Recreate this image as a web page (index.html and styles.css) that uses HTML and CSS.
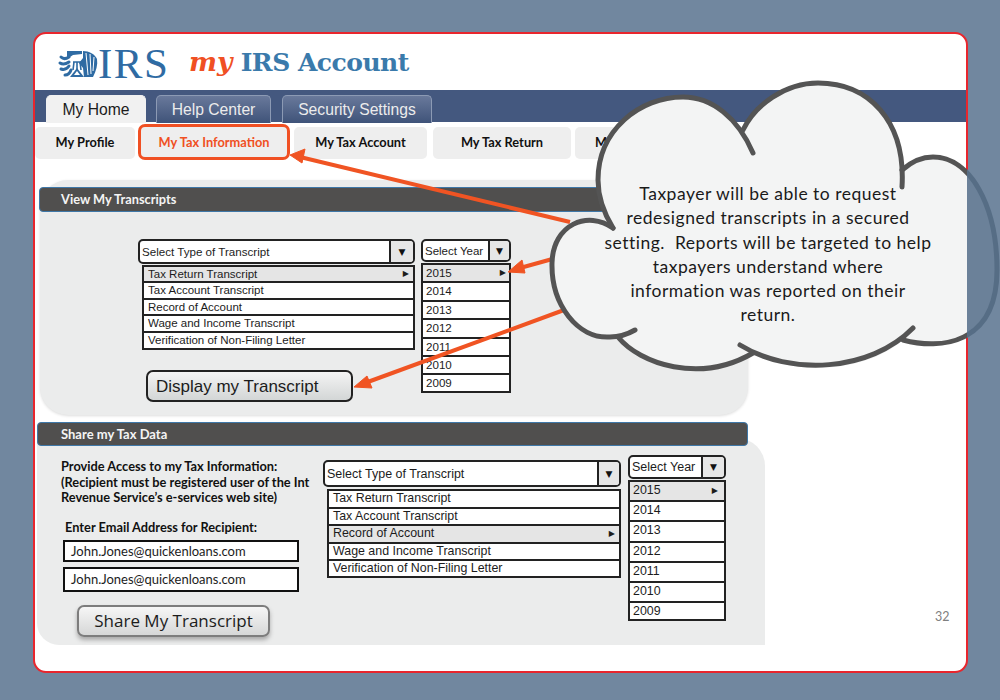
FILE: index.html
```html
<!DOCTYPE html>
<html lang="en">
<head>
    <meta charset="UTF-8">
    <meta name="viewport" content="width=device-width, initial-scale=1.0">
    <title>my IRS Account</title>
    <link rel="stylesheet" href="styles.css">
</head>
<body>
    <div class="slide">
        <div class="brand">
            <svg class="emblem" viewBox="0 0 40 28" width="40" height="28">
                <g fill="none" stroke="#2f6ba3" stroke-width="3" stroke-linecap="round">
                    <path d="M3 7c2 2 5 2 8 0"/>
                    <path d="M2 13c3 2 6 1 9-1"/>
                    <path d="M3 19c3 1 6 0 8-3"/>
                    <path d="M7 25c3 0 5-2 6-5"/>
                </g>
                <path d="M9 1h15v3l-9 1-3 2H9z" fill="#2f6ba3"/>
                <path d="M25 1c6 0 12 3 14 8 1 6-1 12-4 18H26l-1-9-4-5 4-5z" fill="#2f6ba3"/>
                <path d="M28 3l2 22M32 4l1 20M36 7l-1 14" stroke="#fff" stroke-width="1" fill="none"/>
                <path d="M15 12h8M16 12l-1 8M19 12v8M22 12l1 8" stroke="#2f6ba3" stroke-width="1.6" fill="none"/>
                <path d="M19 18l7 9H12z" fill="#2f6ba3"/>
                <path d="M19 21l3 4h-6z" fill="#fff"/>
            </svg>
            <span class="brand-irs">IRS</span>
            <span class="brand-title"><em>my</em> IRS Account</span>
        </div>

        <div class="tabs">
            <div class="tab tab-active">My Home</div>
            <div class="tab tab-help">Help Center</div>
            <div class="tab tab-security">Security Settings</div>
        </div>

        <div class="subnav">
            <div class="subnav-item item-profile">My Profile</div>
            <div class="subnav-item item-info">My Tax Information</div>
            <div class="subnav-item item-account">My Tax Account</div>
            <div class="subnav-item item-return">My Tax Return</div>
            <div class="subnav-item item-more">My</div>
        </div>

        <div class="panel-view">
            <div class="bar bar-view">View My Transcripts</div>
            <div class="view-row">
                <div class="view-left">
                    <div class="select select-type">
                        <span class="select-label">Select Type of Transcript</span>
                        <span class="select-btn">▼</span>
                    </div>
                    <div class="list list-type">
                        <div class="row active">Tax Return Transcript<span class="caret">▶</span></div>
                        <div class="row">Tax Account Transcript</div>
                        <div class="row">Record of Account</div>
                        <div class="row">Wage and Income Transcript</div>
                        <div class="row">Verification of Non-Filing Letter</div>
                    </div>
                    <div class="btn-display">Display my Transcript</div>
                </div>
                <div class="view-right">
                    <div class="select select-year">
                        <span class="select-label">Select Year</span>
                        <span class="select-btn">▼</span>
                    </div>
                    <div class="list list-year">
                        <div class="row active">2015<span class="caret">▶</span></div>
                        <div class="row">2014</div>
                        <div class="row">2013</div>
                        <div class="row">2012</div>
                        <div class="row">2011</div>
                        <div class="row">2010</div>
                        <div class="row">2009</div>
                    </div>
                </div>
            </div>
        </div>

        <div class="share">
            <div class="bar bar-share">Share my Tax Data</div>
            <div class="share-body">
                <div class="share-left">
                    <p class="share-note">Provide Access to my Tax Information:<br>(Recipient must be registered user of the Int<br>Revenue Service’s e-services web site)</p>
                    <p class="share-label">Enter Email Address for Recipient:</p>
                    <div class="email">John.Jones@quickenloans.com</div>
                    <div class="email email-second">John.Jones@quickenloans.com</div>
                    <div class="btn-share">Share My Transcript</div>
                </div>
                <div class="share-mid">
                    <div class="select select-type2">
                        <span class="select-label">Select Type of Transcript</span>
                        <span class="select-btn">▼</span>
                    </div>
                    <div class="list list-type2">
                        <div class="row">Tax Return Transcript</div>
                        <div class="row">Tax Account Transcript</div>
                        <div class="row active">Record of Account<span class="caret">▶</span></div>
                        <div class="row">Wage and Income Transcript</div>
                        <div class="row">Verification of Non-Filing Letter</div>
                    </div>
                </div>
                <div class="share-right">
                    <div class="select select-year2">
                        <span class="select-label">Select Year</span>
                        <span class="select-btn">▼</span>
                    </div>
                    <div class="list list-year2">
                        <div class="row active">2015<span class="caret">▶</span></div>
                        <div class="row">2014</div>
                        <div class="row">2013</div>
                        <div class="row">2012</div>
                        <div class="row">2011</div>
                        <div class="row">2010</div>
                        <div class="row">2009</div>
                    </div>
                </div>
            </div>
        </div>

        <div class="page-num">32</div>
    </div>

    <!-- arrows and the cloud lie over the slide -->
    <svg class="overlay" viewBox="0 0 1000 700" width="1000" height="700">
        <defs>
            <clipPath id="inside"><rect x="0" y="0" width="967" height="700"/></clipPath>
            <clipPath id="outside"><rect x="967" y="0" width="33" height="700"/></clipPath>
            <path id="cloud-fill" d="M613 228C588 210 553 224 552 263C551 305 578 339 618 337C640 364 700 384 753 353C800 378 870 370 903 340C940 350 997 345 997 270C997 205 970 157 933 157C920 157 910 163 902 170C902 120 868 83 818 83C785 83 755 105 743 130C725 108 705 97 683 97C640 97 598 130 598 180C598 200 605 215 613 228Z"/>
            <g id="cloud-lines">
                <path d="M613 228C588 210 553 224 552 263C551 305 578 339 610 337C620 337 628 334 635 330"/>
                <path d="M618 337C640 364 700 384 753 353"/>
                <path d="M740 345C790 376 870 372 913 328"/>
                <path d="M903 340C940 350 997 345 997 270C997 205 970 157 933 157C920 157 910 163 902 170"/>
                <path d="M902 187C906 120 868 83 818 83C785 83 755 105 743 130"/>
                <path d="M753 153C738 118 712 97 683 97C640 97 598 130 598 180C598 200 605 215 613 228"/>
            </g>
        </defs>
        <g fill="#f05423" stroke="#f05423">
            <path d="M570 222L300 157" fill="none" stroke-width="4"/>
            <path d="M290 155L305 149L302 163Z" stroke-width="1"/>
            <path d="M556 258L520 268" fill="none" stroke-width="4"/>
            <path d="M508 272L522 260L525 273Z" stroke-width="1"/>
            <path d="M564 310L365 383" fill="none" stroke-width="4"/>
            <path d="M354 387L367 376L372 388Z" stroke-width="1"/>
        </g>
        <g clip-path="url(#inside)">
            <use href="#cloud-fill" fill="#f3f4f4"/>
            <use href="#cloud-lines" fill="none" stroke="#545454" stroke-width="5" stroke-linecap="round"/>
        </g>
        <g clip-path="url(#outside)">
            <use href="#cloud-fill" fill="#6b8199"/>
            <use href="#cloud-lines" fill="none" stroke="#566d85" stroke-width="5"/>
        </g>
    </svg>
    <div class="cloud-text">Taxpayer will be able to request<br>redesigned transcripts in a secured<br>setting.  Reports will be targeted to help<br>taxpayers understand where<br>information was reported on their<br>return.</div>
</body>
</html>
```

FILE: styles.css
```css
html, body {
    margin: 0;
    height: 700px;
    overflow: hidden;
}
body {
    position: relative;
    background-color: #71879f;
    font-family: "Liberation Sans", Arial, sans-serif;
    color: #1c1c1c;
}
.slide {
    position: relative;
    box-sizing: border-box;
    width: 935px;
    height: 641px;
    margin-left: 33px;
    top: 32px;
    background-color: #fff;
    border: 2px solid #e8262d;
    border-radius: 13px;
}

/* header */
.brand {
    display: flex;
    align-items: center;
    height: 56px;
    padding-left: 23px;
    box-sizing: border-box;
}
.emblem {
    flex: none;
    margin-top: 4px;
}
.brand-irs {
    font-family: "Liberation Serif", serif;
    font-size: 43px;
    line-height: 48px;
    letter-spacing: 1.5px;
    color: #2f6ba3;
    width: 91px;
    margin-top: 4px;
}
.brand-title {
    font-family: "DejaVu Serif", serif;
    font-weight: bold;
    font-size: 25px;
    letter-spacing: -0.5px;
    color: #3a7aab;
    margin-top: -2px;
}
.brand-title em {
    font-size: 26.5px;
    letter-spacing: 0;
    color: #f05023;
}

/* tabs */
.tabs {
    display: flex;
    height: 32px;
    padding: 5px 0 0 11px;
    box-sizing: border-box;
    background-color: #44587f;
}
.tab {
    box-sizing: border-box;
    height: 28px;
    line-height: 28px;
    text-align: center;
    font-size: 15.7px;
    color: #ececec;
    border: 1px solid #8c9ab4;
    border-bottom: none;
    border-radius: 5px 5px 0 0;
    background: linear-gradient(#69799b, #3f5379);
}
.tab-active {
    width: 100px;
    color: #1c1c1c;
    border-color: #f1f1f1;
    background: #f1f1f1;
    position: relative;
    z-index: 1;
}
.tab-help {
    width: 115px;
    margin-left: 10px;
}
.tab-security {
    width: 150px;
    margin-left: 11px;
}

/* sub navigation */
.subnav {
    display: flex;
    height: 31px;
    margin-top: 5px;
}
.subnav-item {
    box-sizing: border-box;
    height: 32px;
    line-height: 31px;
    text-align: center;
    font-family: Lato, sans-serif;
    font-weight: bold;
    font-size: 12.8px;
    color: #111;
    background-color: #eeeeee;
    border-radius: 5px;
}
.item-profile {
    width: 100px;
}
.item-info {
    width: 152px;
    height: 36px;
    margin: -3px 0 0 3px;
    line-height: 31px;
    color: #f05023;
    border: 3px solid #f05023;
    border-radius: 7px;
}
.item-account {
    width: 133px;
    margin-left: 4px;
}
.item-return {
    width: 138px;
    margin-left: 6px;
}
.item-more {
    width: 120px;
    margin-left: 4px;
    text-align: left;
    padding-left: 20px;
}

/* section bars */
.bar {
    box-sizing: border-box;
    font-family: Lato, sans-serif;
    font-weight: bold;
    font-size: 12.8px;
    color: #f4f4f4;
    background-color: #504f4e;
    border: 1px solid #3f78a8;
    border-radius: 4px;
    padding-left: 21px;
}

/* first panel */
.panel-view {
    box-sizing: border-box;
    width: 708px;
    height: 235px;
    margin: 22px 0 0 5px;
    padding-top: 7px;
    background-color: #ebecec;
    border-radius: 28px;
    box-shadow: 0 1px 3px #ddd;
}
.bar-view {
    width: 709px;
    height: 25px;
    line-height: 23px;
    margin-left: -1px;
}
.view-row {
    display: flex;
    align-items: flex-start;
    margin-top: 27px;
    padding-left: 98px;
}
.view-left {
    width: 277px;
}
.view-right {
    width: 90px;
    margin-left: 6px;
}

/* dropdowns */
.select {
    box-sizing: border-box;
    display: flex;
    background-color: #fff;
    border: 2px solid #222;
    border-radius: 5px;
    overflow: hidden;
}
.select-label {
    flex: 1;
    padding-left: 2px;
    white-space: nowrap;
}
.select-btn {
    border-left: 2px solid #222;
    background-color: #e6e6e6;
    text-align: center;
    font-family: "DejaVu Sans", sans-serif;
    font-size: 9px;
    color: #111;
}
.list {
    box-sizing: border-box;
    border: 2px solid #222;
    background-color: #fff;
}
.row {
    display: flex;
    justify-content: space-between;
    box-sizing: border-box;
    border-bottom: 2px solid #222;
    padding: 0 4px;
    white-space: nowrap;
}
.row:last-child {
    border-bottom: none;
}
.row.active {
    background-color: #e5e5e5;
}
.caret {
    font-family: "DejaVu Sans", sans-serif;
    font-size: 8px;
}

.select-type {
    height: 25px;
    font-size: 11.6px;
    line-height: 22px;
}
.select-type .select-btn {
    width: 22px;
}
.list-type {
    height: 85px;
    margin: 1px 0 0 4px;
    font-size: 11.5px;
}
.list-type .row {
    height: 16.4px;
    line-height: 14px;
}
.select-year {
    height: 23px;
    font-size: 11.5px;
    line-height: 20px;
}
.select-year .select-btn {
    width: 19px;
}
.list-year {
    height: 130px;
    margin-top: 1px;
    font-size: 11.6px;
}
.list-year .row {
    height: 18.4px;
    line-height: 16px;
    padding: 0 3px;
}
.btn-display {
    box-sizing: border-box;
    width: 207px;
    height: 32px;
    margin: 20px 0 0 8px;
    padding-left: 8px;
    line-height: 29px;
    font-size: 17px;
    background: linear-gradient(#f4f4f4, #d3d6d6);
    border: 2px solid #222;
    border-radius: 7px;
}

/* second panel */
.share {
    margin: 7px 0 0 2px;
}
.bar-share {
    position: relative;
    width: 711px;
    height: 24px;
    line-height: 22px;
    padding-left: 23px;
    font-size: 13px;
}
.share-body {
    box-sizing: border-box;
    display: flex;
    align-items: flex-start;
    width: 728px;
    height: 207px;
    margin-top: -8px;
    padding: 17px 0 0 24px;
    background-color: #ebecec;
    border-radius: 0 28px 0 22px;
}
.share-left {
    width: 262px;
    flex: none;
}
.share-note {
    margin: 4px 0 0;
    font-family: Lato, sans-serif;
    font-weight: bold;
    font-size: 12.8px;
    line-height: 15.5px;
    color: #111;
    white-space: nowrap;
}
.share-label {
    margin: 14px 0 0 4px;
    font-family: Lato, sans-serif;
    font-weight: bold;
    font-size: 12.8px;
    line-height: 15px;
    color: #111;
}
.email {
    box-sizing: border-box;
    width: 236px;
    height: 22px;
    margin: 5px 0 0 2px;
    padding-left: 6px;
    line-height: 18px;
    font-family: Lato, sans-serif;
    font-size: 13px;
    background-color: #fff;
    border: 2px solid #111;
}
.email-second {
    height: 25px;
    line-height: 21px;
}
.btn-share {
    box-sizing: border-box;
    width: 193px;
    height: 32px;
    margin: 13px 0 0 16px;
    text-align: center;
    line-height: 28px;
    font-family: "Open Sans", sans-serif;
    font-size: 17px;
    background: linear-gradient(#f6f6f6, #d6d7d7);
    border: 2px solid #7d7d7d;
    border-radius: 7px;
    box-shadow: 0 3px 4px #aaa;
}
.share-mid {
    width: 298px;
    margin-top: 5px;
    flex: none;
}
.select-type2 {
    height: 27px;
    font-size: 12.5px;
    line-height: 24px;
}
.select-type2 .select-btn {
    width: 20px;
}
.list-type2 {
    height: 89px;
    margin: 2px 0 0 4px;
    font-size: 12.4px;
}
.list-type2 .row {
    height: 17.6px;
    line-height: 15px;
}
.share-right {
    width: 98px;
    margin-left: 7px;
    flex: none;
}
.select-year2 {
    height: 24px;
    font-size: 12.5px;
    line-height: 21px;
}
.select-year2 .select-btn {
    width: 21px;
}
.list-year2 {
    height: 141px;
    margin-top: 1px;
    font-size: 12.4px;
}
.list-year2 .row {
    height: 20.2px;
    line-height: 17px;
    padding: 0 3px;
}
.list-year2 .caret {
    padding-right: 3px;
}

.page-num {
    position: absolute;
    left: 900px;
    top: 575px;
    font-family: Lato, sans-serif;
    font-size: 12.5px;
    color: #808080;
}

/* overlay */
.overlay {
    position: absolute;
    left: 0;
    top: 0;
}
.cloud-text {
    position: absolute;
    left: 568px;
    top: 182px;
    width: 400px;
    text-align: center;
    font-family: Lato, sans-serif;
    font-size: 17.5px;
    letter-spacing: 0.5px;
    line-height: 24.3px;
    color: #1a1a1a;
    white-space: pre-wrap;
}
```
